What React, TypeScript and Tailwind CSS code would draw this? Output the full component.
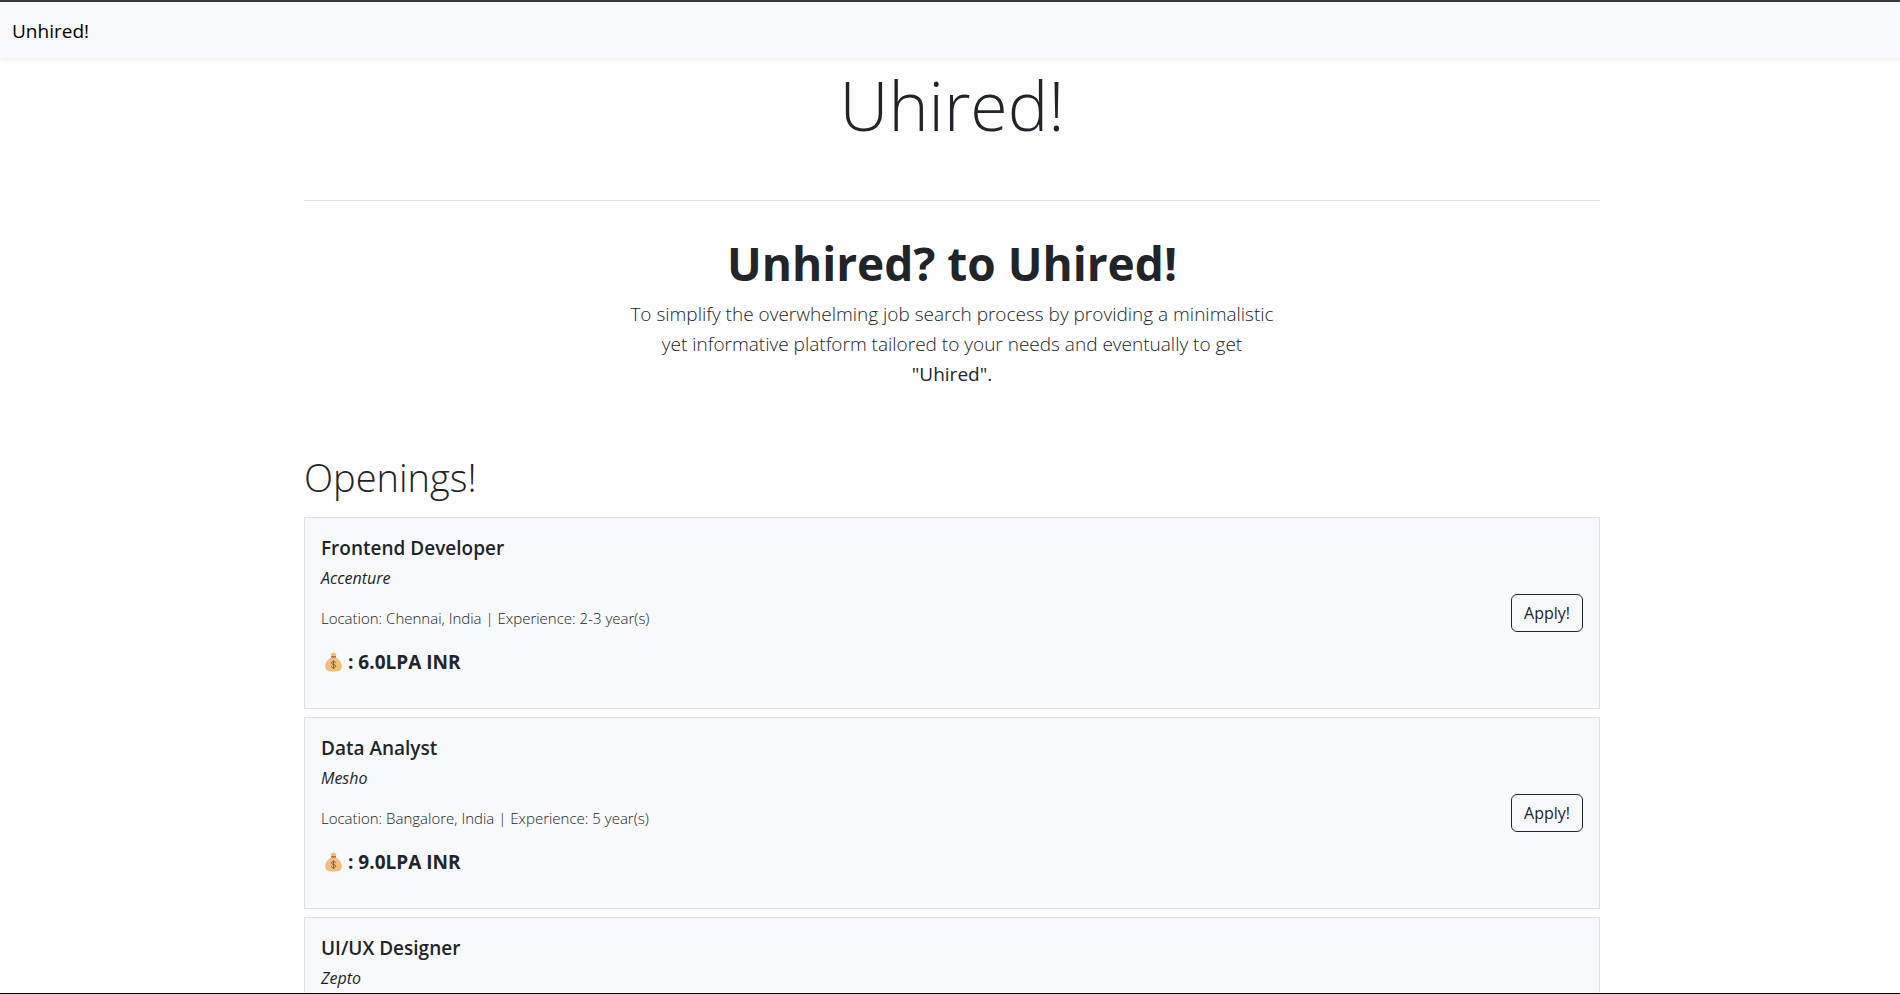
interface Opening {
  id: number;
  title: string;
  company: string;
  details?: string;
  salary?: string;
}

const openings: Opening[] = [
  {
    id: 1,
    title: "Frontend Developer",
    company: "Accenture",
    details: "Location: Chennai, India | Experience: 2-3 year(s)",
    salary: "6.0LPA INR",
  },
  {
    id: 2,
    title: "Data Analyst",
    company: "Mesho",
    details: "Location: Bangalore, India | Experience: 5 year(s)",
    salary: "9.0LPA INR",
  },
  { id: 3, title: "UI/UX Designer", company: "Zepto" },
];

function MoneyBag() {
  return (
    <svg viewBox="0 0 17 20" className="h-5 w-[17px]" aria-hidden="true">
      <path
        d="M5.4 1.2 7 1.6 8.5.3 10 1.6l1.6-.4-1 3.2c.4 1 .9 1.6 1.8 2.2 2.6 1.8 4.4 4.4 4.4 7.4 0 4-2 5.7-8.3 5.7S.2 18 .2 14c0-3 1.8-5.600 4.400-7.400.9-.6 1.400-1.200 1.800-2.200z"
        fill="#f3be7c"
      />
      <path d="M6.500 4.800h4" stroke="#8a5a44" strokeWidth="1.2" strokeLinecap="round" />
      <path
        d="M10.500 10.700c-.3-.8-1-1.200-2-1.200-1.100 0-1.900.6-1.900 1.500 0 2.100 4 1.100 4 3.200 0 1-.8 1.600-2 1.600-1.100 0-1.900-.5-2.100-1.400M8.500 8.300v8.700"
        fill="none"
        stroke="#8a5a44"
        strokeWidth="1"
      />
    </svg>
  );
}

function OpeningCard({ opening }: { opening: Opening }) {
  return (
    <li className="flex min-h-48 items-center justify-between border border-[#dee2e6] bg-[#f8f9fb] px-4">
      <div className="self-stretch pt-4">
        <h3 className="text-[19px] leading-7 font-semibold">{opening.title}</h3>
        <p className="mt-1 text-base leading-6 italic">{opening.company}</p>
        {opening.details && (
          <p className="mt-4 text-[15px] leading-6 font-light">{opening.details}</p>
        )}
        {opening.salary && (
          <p className="mt-[18px] flex items-center gap-1.5 pl-1 text-[19px] leading-7 font-bold">
            <MoneyBag />
            <span>: {opening.salary}</span>
          </p>
        )}
      </div>
      {opening.salary && (
        <button
          type="button"
          className="rounded-md border border-[#212529] px-3 py-1.5 text-base leading-6"
        >
          Apply!
        </button>
      )}
    </li>
  );
}

export default function App() {
  return (
    <div className="flex h-screen flex-col overflow-hidden border-t-2 border-b border-t-[#3a3a3d] border-b-black bg-white font-['Open_Sans','Noto_Sans',sans-serif] text-[#212529]">
      <nav className="flex h-14 shrink-0 items-center bg-[#f8f9fb] px-3 pt-0.5 shadow-[0_2px_4px_rgba(0,0,0,0.075)]">
        <a href="#" className="text-[19px] leading-7 text-black">
          Unhired!
        </a>
      </nav>
      <main className="min-h-0 flex-1 pl-1">
        <div className="mx-auto max-w-[1296px]">
          <h1 className="pt-1 text-center text-[68px] leading-[86px] font-light">Uhired!</h1>
          <hr className="mt-[52px] border-[#dee2e6]" />
          <section className="mx-auto max-w-[648px] pt-8 text-center">
            <h2 className="text-[46px] leading-[60px] font-bold">Unhired? to Uhired!</h2>
            <p className="mt-1.5 text-[19px] leading-[30px] font-light">
              To simplify the overwhelming job search process by providing a minimalistic yet
              informative platform tailored to your needs and eventually to get{" "}
              <span className="font-normal">"Uhired".</span>
            </p>
          </section>
          <h2 className="mt-16 text-[38px] leading-12 font-light">Openings!</h2>
          <ul className="mt-4 flex flex-col gap-2">
            {openings.map((opening) => (
              <OpeningCard key={opening.id} opening={opening} />
            ))}
          </ul>
        </div>
      </main>
    </div>
  );
}
